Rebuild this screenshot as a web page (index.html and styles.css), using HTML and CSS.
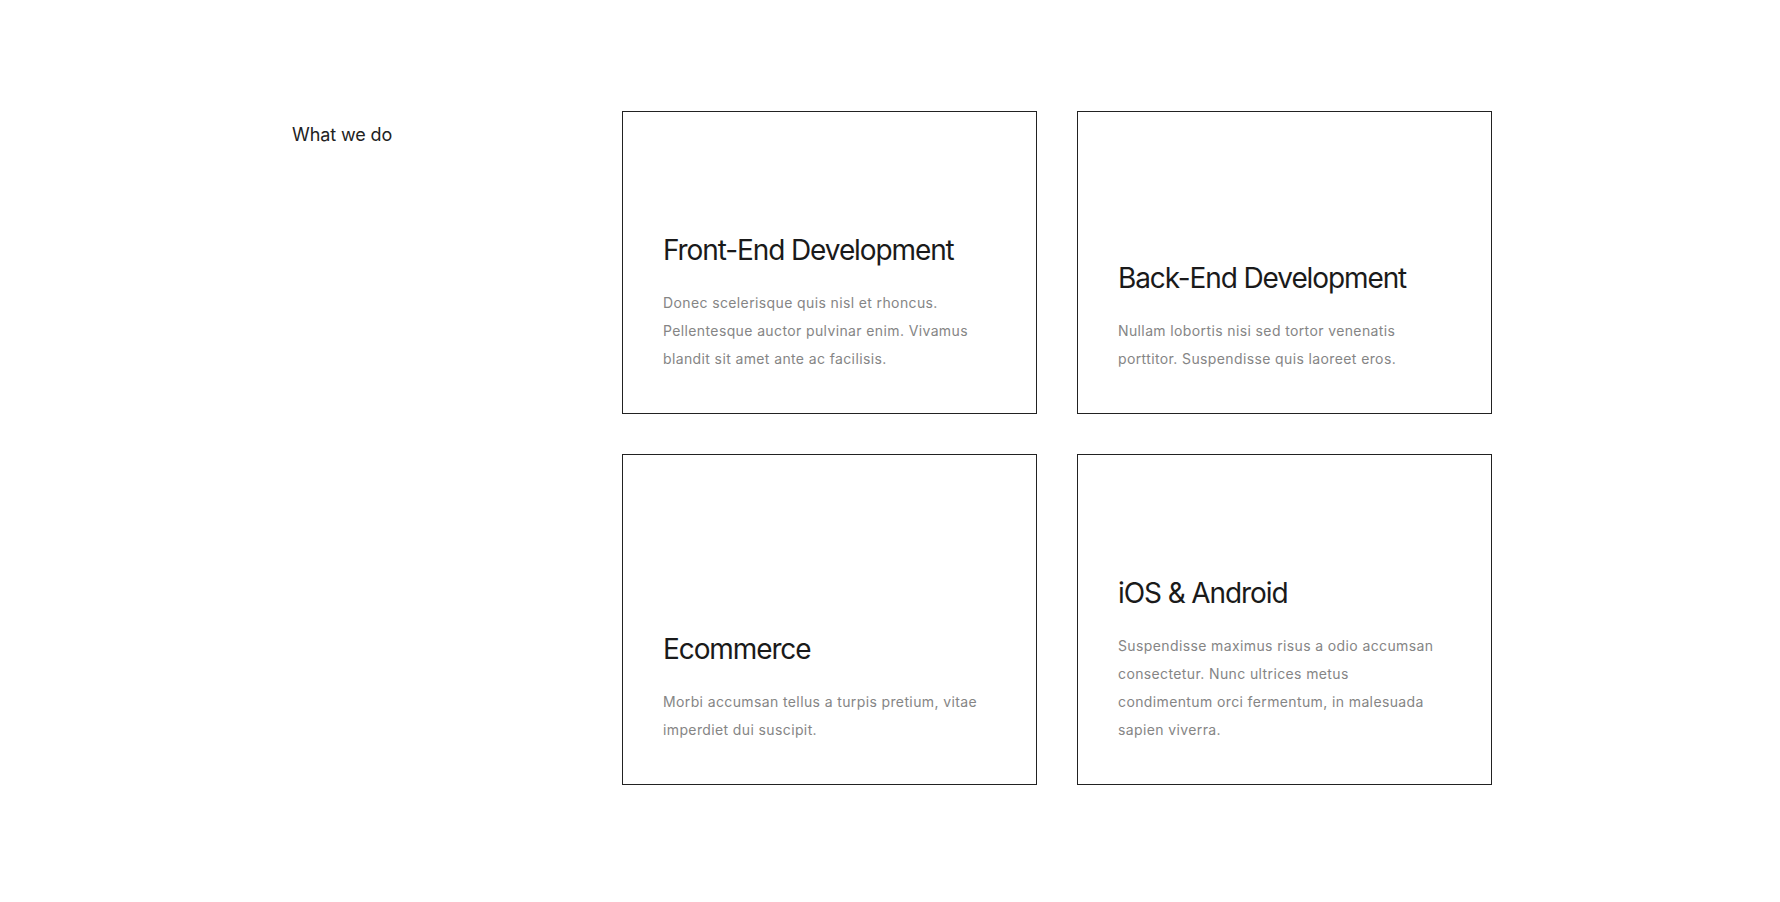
FILE: index.html
```html
<!DOCTYPE html>
<html lang="en">
<head>
<meta charset="utf-8">
<title>What we do</title>
<link rel="stylesheet" href="styles.css">
</head>
<body>
<section class="services">
  <div class="services-intro">
    <h2 class="services-label">What we do</h2>
  </div>
  <div class="services-grid">
    <article class="service-card">
      <div class="service-icon"></div>
      <h3 class="service-title">Front-End Development</h3>
      <p class="service-text">Donec scelerisque quis nisl et rhoncus. Pellentesque auctor pulvinar enim. Vivamus blandit sit amet ante ac facilisis.</p>
    </article>
    <article class="service-card">
      <div class="service-icon"></div>
      <h3 class="service-title">Back-End Development</h3>
      <p class="service-text">Nullam lobortis nisi sed tortor venenatis porttitor. Suspendisse quis laoreet eros.</p>
    </article>
    <article class="service-card">
      <div class="service-icon"></div>
      <h3 class="service-title">Ecommerce</h3>
      <p class="service-text">Morbi accumsan tellus a turpis pretium, vitae imperdiet dui suscipit.</p>
    </article>
    <article class="service-card">
      <div class="service-icon"></div>
      <h3 class="service-title">iOS &amp; Android</h3>
      <p class="service-text">Suspendisse maximus risus a odio accumsan consectetur. Nunc ultrices metus condimentum orci fermentum, in malesuada sapien viverra.</p>
    </article>
  </div>
</section>
</body>
</html>
```

FILE: styles.css
```css
* { box-sizing: border-box; }

html, body {
  margin: 0;
  padding: 0;
  background: #ffffff;
}

body {
  font-family: "Inter", "Open Sans", sans-serif;
  color: #1c1c1c;
}

.services {
  display: flex;
  align-items: flex-start;
  padding: 111px 0 80px 292px;
}

.services-intro {
  width: 330px;
  flex: none;
}

.services-label {
  margin: 10px 0 0;
  font-size: 18px;
  line-height: 27px;
  font-weight: 400;
  letter-spacing: -0.1px;
  color: #222222;
}

.services-grid {
  display: grid;
  grid-template-columns: 415px 415px;
  gap: 40px;
}

.service-card {
  display: flex;
  flex-direction: column;
  justify-content: flex-end;
  border: 1px solid #222222;
  padding: 40px;
}

.service-icon {
  height: 60px;
  margin-bottom: 20px;
  flex: none;
}

.service-title {
  margin: 0 0 21px;
  font-size: 28px;
  line-height: 36px;
  font-weight: 400;
  letter-spacing: -1.1px;
  color: #1a1a1a;
}

.service-text {
  margin: 0;
  font-size: 14px;
  line-height: 28px;
  letter-spacing: 0.38px;
  color: #858585;
  max-width: 320px;
}
```
